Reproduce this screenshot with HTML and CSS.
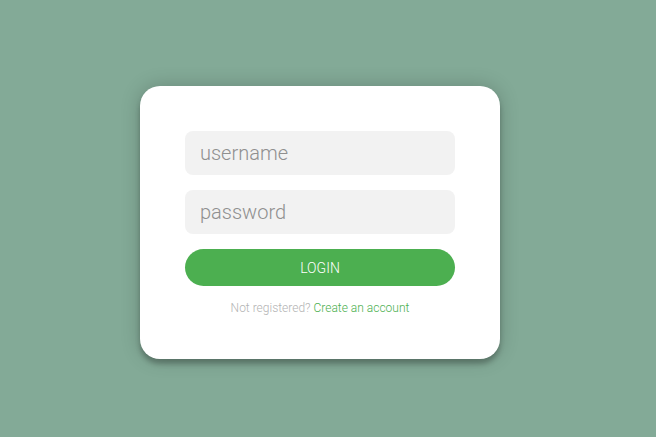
FILE: index.html
```html
<!DOCTYPE html>
<html>
<head>
<meta charset="utf-8">
<link rel="stylesheet" href="styles.css">
</head>
<body>
<div class="page">
  <div class="card">
    <form class="form">
      <input class="field" type="text" placeholder="username">
      <input class="field" type="password" placeholder="password">
      <button class="btn" type="button">LOGIN</button>
      <p class="message">Not registered? <a href="#">Create an account</a></p>
    </form>
  </div>
</div>
</body>
</html>
```
FILE: styles.css
```css
html, body {
  margin: 0;
  height: 100%;
}
body {
  background: #83aa97;
  font-family: Roboto, "Liberation Sans", sans-serif;
}
.page {
  padding: 86px 0 0 140px;
}
.card {
  width: 360px;
  box-sizing: border-box;
  background: #fff;
  border-radius: 20px;
  padding: 45px 45px 45px;
  height: 273px;
  box-shadow: 0 0 20px rgba(0,0,0,0.2), 0 5px 5px rgba(0,0,0,0.24);
}
.form {
  display: flex;
  flex-direction: column;
}
.field {
  font-family: Roboto, "Liberation Sans", sans-serif;
  font-weight: 300;
  background: #f2f2f2;
  border: 0;
  outline: 0;
  border-radius: 8px;
  height: 44px;
  box-sizing: border-box;
  padding: 0 15px;
  font-size: 20px;
  margin: 0 0 15px;
  color: #333;
}
.field::placeholder {
  color: #8f8f8f;
}
.btn {
  font-family: Roboto, "Liberation Sans", sans-serif;
  font-weight: 300;
  background: #4caf50;
  color: #fff;
  border: 0;
  height: 37px;
  border-radius: 19px;
  font-size: 14px;
  cursor: pointer;
}
.message {
  margin: 15px 0 0;
  text-align: center;
  color: #b3b3b3;
  font-size: 12px;
  font-weight: 300;
}
.message a {
  color: #4caf50;
  text-decoration: none;
}
```
